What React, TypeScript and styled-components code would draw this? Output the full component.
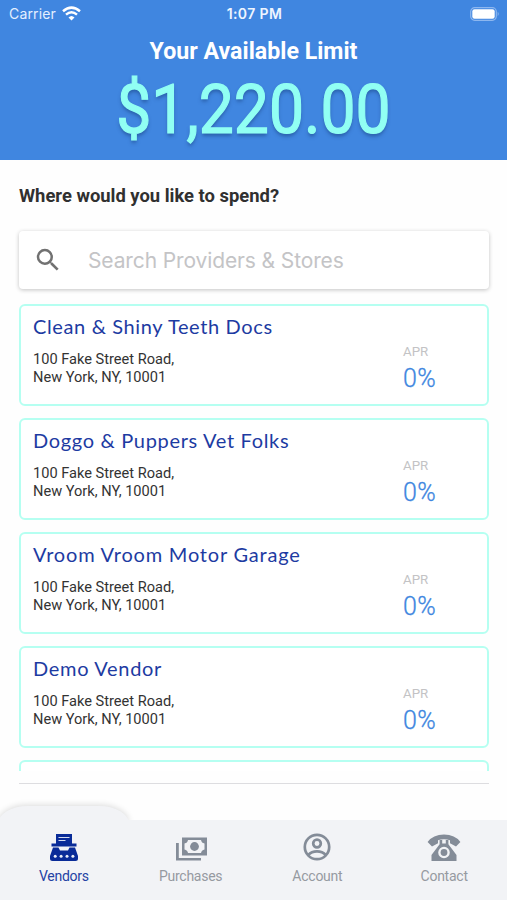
import React from 'react';
import styled, { createGlobalStyle } from 'styled-components';

const GlobalStyle = createGlobalStyle`
  *, *::before, *::after { box-sizing: border-box; }
  body { margin: 0; background: #fefefe; overflow: hidden; }
`;

const Screen = styled.div`
  width: 507px;
  height: 900px;
  display: flex;
  flex-direction: column;
  overflow: hidden;
  background: #fefefe;
  font-family: Roboto, sans-serif;
`;

const Header = styled.header`
  flex: none;
  height: 160px;
  background: #4086e0;
  color: #fff;
`;

const StatusBar = styled.div`
  height: 28px;
  padding: 0 7px 0 9px;
  display: grid;
  grid-template-columns: 1fr auto 1fr;
  align-items: center;
  font: 400 14px/28px Inter, sans-serif;
`;

const Carrier = styled.div`
  display: flex;
  align-items: center;
  gap: 6px;
  letter-spacing: 0.15px;
  color: #e4efff;
  svg { display: block; margin-top: -2px; }
`;

const Clock = styled.div`
  font-weight: 600;
  font-size: 14px;
  letter-spacing: 0.4px;
  color: #eef5ff;
`;

const Battery = styled.div`
  justify-self: end;
  display: flex;
  svg { display: block; margin-top: -1px; }
`;

const LimitTitle = styled.h1`
  margin: 9px 0 0;
  font-size: 23.2px;
  line-height: 28px;
  font-weight: 700;
  text-align: center;
`;

const Amount = styled.div`
  display: flex;
  justify-content: center;
  height: 82px;
  margin-top: 4px;
  color: #91fff3;
  font-size: 69px;
  line-height: 82px;
  font-weight: 400;
  white-space: nowrap;
  transform: scaleX(0.905);
  -webkit-text-stroke: 1.2px #91fff3;
  text-shadow: 0 3px 4px rgba(20, 60, 120, 0.5);
`;

const Main = styled.main`
  flex: 1;
  min-height: 0;
  padding: 0 18px 0 19px;
`;

const Question = styled.h2`
  margin: 24px 0 0;
  font-size: 18.4px;
  line-height: 24px;
  font-weight: 700;
  color: #303030;
`;

const SearchBox = styled.label`
  display: flex;
  align-items: center;
  height: 58px;
  margin-top: 23px;
  padding-left: 14px;
  border-radius: 4px;
  background: #fff;
  box-shadow: 0 1px 4px rgba(0, 0, 0, 0.24);
  svg { flex: none; display: block; margin-right: 25px; }
`;

const SearchInput = styled.input`
  flex: 1;
  min-width: 0;
  padding: 2px 0 0;
  border: 0;
  outline: 0;
  background: transparent;
  font: 400 21px/28px Inter, sans-serif;
  letter-spacing: -0.12px;
  &::placeholder { color: #c4c4c6; opacity: 1; }
`;

const VendorList = styled.div`
  height: 467px;
  margin-top: 15px;
  overflow: hidden;
  display: flex;
  flex-direction: column;
  gap: 12px;
`;

const Divider = styled.div`
  height: 1px;
  margin-top: 12px;
  background: #dddde0;
`;

const VendorCard = styled.article`
  flex: none;
  height: 102px;
  padding: 0 50px 0 12px;
  display: flex;
  justify-content: space-between;
  border: 2px solid #b5fff1;
  border-radius: 6px;
  background: #fff;
`;

const VendorName = styled.h3<{ $spacing: number }>`
  margin: 7px 0 0;
  font: 400 20px/26px Lato, sans-serif;
  letter-spacing: ${({ $spacing }) => $spacing}px;
  white-space: nowrap;
  color: #1d3ba2;
`;

const Address = styled.p`
  margin: 12px 0 0;
  font-size: 14.6px;
  line-height: 17.5px;
  white-space: pre-line;
  color: #333;
`;

const Rate = styled.div`
  width: 34px;
  padding-top: 37px;
`;

const RateLabel = styled.div`
  font-size: 13.3px;
  line-height: 18px;
  color: #c3c3c5;
`;

const RateValue = styled.div`
  margin-top: 3px;
  font-size: 25px;
  line-height: 30px;
  font-weight: 300;
  letter-spacing: 0.3px;
  -webkit-text-stroke: 0.3px #4086e0;
  color: #4086e0;
`;

const TabBar = styled.nav`
  position: relative;
  flex: none;
  height: 80px;
  display: grid;
  grid-template-columns: repeat(4, 1fr);
  background: #f2f3f6;
`;

const RaisedTab = styled.div`
  position: absolute;
  top: -14px;
  left: -2px;
  width: 131px;
  height: 18px;
  border-radius: 30px 30px 0 0 / 18px 18px 0 0;
  background: #f2f3f6;
  box-shadow: 0 -1px 6px rgba(0, 0, 0, 0.14);
  clip-path: inset(-12px -12px 4px -12px);
`;

const Tab = styled.button<{ $active?: boolean }>`
  position: relative;
  display: flex;
  flex-direction: column;
  align-items: center;
  padding: 10px 0 0 1px;
  border: 0;
  background: transparent;
  color: ${({ $active }) => ($active ? '#092b98' : '#848c98')};
  font: 400 14px/18px Roboto, sans-serif;
  letter-spacing: -0.25px;
  svg { display: block; height: 34px; margin-bottom: 3px; }
`;

const TabLabel = styled.span<{ $active?: boolean }>`
  color: ${({ $active }) => ($active ? '#2442a4' : '#969aa1')};
`;

const WifiIcon = () => (
  <svg width="19" height="15" viewBox="0 0 19 15" fill="none" stroke="#fff" strokeWidth="2.5">
    <path d="M1 5.2Q9.5-2 18 5.2" />
    <path d="M4 8.6Q9.5 4 15 8.6" />
    <path d="M6.5 11.4Q9.5 8.4 12.5 11.4L9.5 14.4Z" fill="#fff" stroke="none" />
  </svg>
);

const BatteryIcon = () => (
  <svg width="30" height="14" viewBox="0 0 30 14">
    <rect x="0.7" y="0.7" width="25.6" height="12.6" rx="4" fill="none" stroke="#8db7ef" strokeWidth="1.2" />
    <rect x="2.3" y="2.3" width="22.4" height="9.4" rx="2.2" fill="#fff" />
    <path d="M27.7 4.8Q29.7 7 27.7 9.2Z" fill="#8db7ef" />
  </svg>
);

const SearchIcon = () => (
  <svg width="30" height="30" viewBox="0 0 24 24" fill="#717171">
    <path d="M15.5 14h-.79l-.28-.27A6.47 6.47 0 0 0 16 9.5 6.5 6.5 0 1 0 9.5 16c1.61 0 3.09-.59 4.23-1.57l.27.28v.79l5 4.99L20.49 19zM9.5 14a4.5 4.5 0 1 1 0-9 4.5 4.5 0 0 1 0 9z" />
  </svg>
);

const VendorsIcon = () => (
  <svg width="30" height="34" viewBox="0 0 30 34" fill="currentColor">
    <path d="M7 4h16v9.5h4.5v3h-25v-3H7z" />
    <path d="M4 17.5h5.5l1.5 3h8l1.5-3H26l3 8.5v2.5Q29 31 26.5 31h-23Q1 31 1 28.5V26z" />
    <path d="M9.5 7.5h11M9.5 10.5h7" stroke="#d5dcef" strokeWidth="1.2" />
    <g fill="#e9edf7">
      <circle cx="6.2" cy="26.3" r="1.5" />
      <circle cx="12.1" cy="26.3" r="1.5" />
      <circle cx="18" cy="26.3" r="1.5" />
      <circle cx="23.9" cy="26.3" r="1.5" />
    </g>
  </svg>
);

const PurchasesIcon = () => (
  <svg width="32" height="34" viewBox="0 0 32 34" fill="currentColor">
    <path fillRule="evenodd" d="M7 7.500h25v18H7zM13 10Q12.500 13 9.500 13.500v6q3 .5 3.500 3.500h13q.5-3 3.500-3.500v-6q-3-.5-3.500-3.500z" />
    <circle cx="19.5" cy="16.5" r="4.4" />
    <path d="M1 13h2.800v15h22.200v2.500H1z" />
  </svg>
);

const AccountIcon = () => (
  <svg width="28" height="34" viewBox="0 0 28 34" fill="none" stroke="currentColor" strokeWidth="2.7">
    <circle cx="14" cy="17" r="12.2" />
    <circle cx="14" cy="13.5" r="3.8" />
    <path d="M5.3 25Q8.5 21.3 14 21.3T22.7 25" />
  </svg>
);

const ContactIcon = () => (
  <svg width="34" height="34" viewBox="0 0 34 34" fill="currentColor">
    <path d="M.6 12Q6 4.500 17 4.500T33.400 12L29 16.500 23 13.300V10.200Q17 8.500 11 10.200V13.300L5 16.500z" />
    <path fillRule="evenodd" d="M12.600 10h2.600v3.500h3.600V10h2.600v4.200L29.500 25v6h-25v-6l8.100-10.800zM17 16.700a5.800 5.800 0 1 0 0 11.600 5.800 5.800 0 0 0 0-11.600z" />
    <circle cx="17" cy="22.5" r="3.4" />
  </svg>
);

const vendors = [
  { name: 'Clean & Shiny Teeth Docs', spacing: 0.63 },
  { name: 'Doggo & Puppers Vet Folks', spacing: 0.68 },
  { name: 'Vroom Vroom Motor Garage', spacing: 0.79 },
  { name: 'Demo Vendor', spacing: 0.7 },
  { name: '', spacing: 0 },
];

const tabs = [
  { label: 'Vendors', Icon: VendorsIcon, active: true },
  { label: 'Purchases', Icon: PurchasesIcon },
  { label: 'Account', Icon: AccountIcon },
  { label: 'Contact', Icon: ContactIcon },
];

export default function App() {
  return (
    <>
      <GlobalStyle />
      <Screen>
        <Header>
          <StatusBar>
            <Carrier>Carrier <WifiIcon /></Carrier>
            <Clock>1:07 PM</Clock>
            <Battery><BatteryIcon /></Battery>
          </StatusBar>
          <LimitTitle>Your Available Limit</LimitTitle>
          <Amount>$1,220.00</Amount>
        </Header>
        <Main>
          <Question>Where would you like to spend?</Question>
          <SearchBox>
            <SearchIcon />
            <SearchInput placeholder="Search Providers &amp; Stores" />
          </SearchBox>
          <VendorList>
            {vendors.map(({ name, spacing }, i) => (
              <VendorCard key={i}>
                {name && (
                  <>
                    <div>
                      <VendorName $spacing={spacing}>{name}</VendorName>
                      <Address>{'100 Fake Street Road,\nNew York, NY, 10001'}</Address>
                    </div>
                    <Rate>
                      <RateLabel>APR</RateLabel>
                      <RateValue>0%</RateValue>
                    </Rate>
                  </>
                )}
              </VendorCard>
            ))}
          </VendorList>
          <Divider />
        </Main>
        <TabBar>
          <RaisedTab />
          {tabs.map(({ label, Icon, active }) => (
            <Tab key={label} $active={active}>
              <Icon />
              <TabLabel $active={active}>{label}</TabLabel>
            </Tab>
          ))}
        </TabBar>
      </Screen>
    </>
  );
}
